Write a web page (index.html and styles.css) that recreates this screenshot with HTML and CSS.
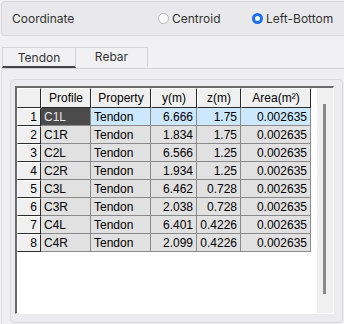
FILE: index.html
```html
<!DOCTYPE html>
<html lang="en">
<head>
<meta charset="UTF-8" />
<title>Section Tendon</title>
<link rel="stylesheet" href="styles.css">
</head>
<body>

<div class="coord-bar">
  <span class="coord-label">Coordinate</span>
  <span class="radio first"><span class="dot"></span>Centroid</span>
  <span class="radio"><span class="dot on"></span>Left-Bottom</span>
</div>

<div class="tabs">
  <div class="tab active">Tendon</div>
  <div class="tab">Rebar</div>
</div>

<div class="tab-body">
  <div class="panel">
    <div class="grid">
      <table>
        <tr>
          <th class="rh"></th><th>Profile</th><th>Property</th><th>y(m)</th><th>z(m)</th><th>Area(m²)</th>
        </tr>
        <tr class="sel">
          <td class="rh">1</td><td class="cur">C1L</td><td>Tendon</td><td class="num">6.666</td><td class="num">1.75</td><td class="num">0.002635</td>
        </tr>
        <tr>
          <td class="rh">2</td><td>C1R</td><td>Tendon</td><td class="num">1.834</td><td class="num">1.75</td><td class="num">0.002635</td>
        </tr>
        <tr>
          <td class="rh">3</td><td>C2L</td><td>Tendon</td><td class="num">6.566</td><td class="num">1.25</td><td class="num">0.002635</td>
        </tr>
        <tr>
          <td class="rh">4</td><td>C2R</td><td>Tendon</td><td class="num">1.934</td><td class="num">1.25</td><td class="num">0.002635</td>
        </tr>
        <tr>
          <td class="rh">5</td><td>C3L</td><td>Tendon</td><td class="num">6.462</td><td class="num">0.728</td><td class="num">0.002635</td>
        </tr>
        <tr>
          <td class="rh">6</td><td>C3R</td><td>Tendon</td><td class="num">2.038</td><td class="num">0.728</td><td class="num">0.002635</td>
        </tr>
        <tr>
          <td class="rh">7</td><td>C4L</td><td>Tendon</td><td class="num">6.401</td><td class="num">0.4226</td><td class="num">0.002635</td>
        </tr>
        <tr>
          <td class="rh">8</td><td>C4R</td><td>Tendon</td><td class="num">2.099</td><td class="num">0.4226</td><td class="num">0.002635</td>
        </tr>
      </table>
      <div class="vscroll"><div class="thumb"></div></div>
    </div>
  </div>
</div>

</body>
</html>
```

FILE: styles.css
```css
html, body { overflow: hidden; }
body { margin: 0; background: #f1f1f4; font-family: Inter, "Liberation Sans", sans-serif; font-size: 12px; color: #333; }

.coord-bar {
  margin: 1px 0 0 1px;
  width: 333px;
  height: 33px;
  border: 1px solid #d8d8dc;
  border-right: none;
  border-radius: 4px 0 0 4px;
  background: #e9e9ec;
  display: flex;
  align-items: center;
  padding-left: 10px;
  box-sizing: content-box;
}
.coord-label { width: 146px; }
.radio { display: flex; align-items: center; gap: 3px; }
.radio.first { width: 94px; }
.dot {
  width: 11px; height: 11px; border-radius: 50%;
  background: #fff; border: 1px solid #b4b4b8; box-sizing: border-box;
}
.dot.on { border: 3px solid #1a6ff0; }

.tabs { display: flex; margin: 11px 0 0 2px; }
.tab {
  height: 19px;
  border: 1px solid #d6d6da;
  border-bottom: none;
  background: #f1f1f4;
  text-align: center;
  line-height: 18px;
  box-sizing: content-box;
}
.tab:first-child { width: 72px; }
.tab + .tab { width: 71px; border-left: none; }
.tab.active { height: 18px; line-height: 20px; border-bottom: 2px solid #444; }

.tab-body {
  margin-left: 1px;
  border-top: 1px solid #d3d3d7;
  border-left: 1px solid #e2e2e6;
  padding: 10px 0 0 8px;
  height: 246px;
  background: #efeff2;
}
.panel {
  width: 333px;
  box-sizing: border-box;
  border: 1px solid #d9d9dd;
  border-radius: 4px;
  background: #ececef;
  padding: 6px 8px 8px 4px;
}
.grid {
  display: flex;
  height: 225px;
  border-top: 2px solid #6a6a6a;
  border-left: 2px solid #6a6a6a;
  border-right: 1px solid #fff;
  border-bottom: 1px solid #fff;
  background: #fff;
}

table {
  border-collapse: separate;
  border-spacing: 0;
  font-family: "Liberation Sans", Arial, sans-serif;
  font-size: 12px;
  color: #000;
  align-self: flex-start;
}
th, td { padding: 0 3px; box-sizing: border-box; white-space: nowrap; }
th {
  height: 20px;
  font-weight: normal;
  background: #f0f0f0;
  border-top: 1px solid #fff;
  border-left: 1px solid #fff;
  border-right: 1px solid #2a2a2a;
  border-bottom: 1px solid #2a2a2a;
}
td {
  height: 18px;
  background: #e1e1e1;
  border-right: 1px solid #8a8a8a;
  border-bottom: 1px solid #8a8a8a;
}
td.rh, th.rh {
  width: 24px;
  text-align: right;
  background: #f0f0f0;
  border-top: 1px solid #fff;
  border-left: 1px solid #fff;
  border-right: 1px solid #2a2a2a;
  border-bottom: 1px solid #2a2a2a;
}
tr > :nth-child(2) { width: 50px; }
tr > :nth-child(3) { width: 60px; }
tr > :nth-child(4) { width: 46px; }
tr > :nth-child(5) { width: 44px; }
tr > :nth-child(6) { width: 70px; }
td.num { text-align: right; }
tr.sel td { background: #cce8ff; }
tr.sel td.rh { background: #f0f0f0; }
tr.sel td.cur { background: #4b4b4b; color: #e6e6e6; }

.vscroll {
  margin-left: auto;
  width: 16px;
  background: #f0f0f0;
  padding: 16px 0 0 6px;
  box-sizing: border-box;
}
.thumb { width: 3px; height: 190px; background: #8a8a8a; }
```
